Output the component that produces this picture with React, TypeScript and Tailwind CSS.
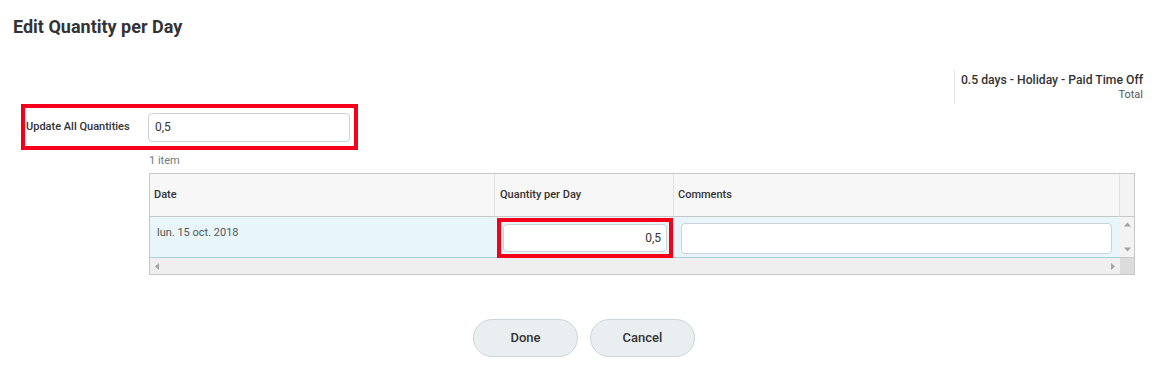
import React from "react";

export default function App() {
  return (
    <div className="w-[1169px] h-[375px] bg-white text-[#333] font-['Roboto',sans-serif] overflow-hidden">
      <div className="pt-[16px] pl-[13px] h-[70px]">
        <h1 className="text-[18px] font-bold leading-[22px] text-[#333]">Edit Quantity per Day</h1>
      </div>
      <div className="flex justify-end pr-[26px] h-[34px]">
        <div className="border-l border-[#e3e3e3] pl-[6px] pt-[2px] flex flex-col items-end">
          <div className="text-[12.2px] font-medium leading-[16px] text-[#333]">0.5 days - Holiday - Paid Time Off</div>
          <div className="text-[11px] leading-[14px] text-[#555]">Total</div>
        </div>
      </div>
      <div className="pl-[21px]">
        <div className="w-[337px] h-[46px] border-[4px] border-[#f4001b] flex items-center">
          <div className="w-[123px] pl-[1px] text-[11px] font-medium text-[#333]">Update All Quantities</div>
          <div className="w-[202px] h-[29px] border border-[#c9d3d8] rounded-[4px] flex items-center px-[6px] text-[12px] text-[#333] bg-white">0,5</div>
        </div>
      </div>
      <div className="pl-[149px] pt-[4px] h-[23px] text-[11px] text-[#6b7b83] leading-[14px]">1 item</div>
      <div className="pl-[149px]">
        <div className="w-[986px] border border-[#c8c8c8] grid grid-cols-[345px_179px_446px_14px]">
          {/* header */}
          <div className="h-[43px] bg-[#f7f7f7] border-b border-[#c8c8c8] border-r border-r-[#e2e2e2] flex items-center pl-[4px] text-[11px] font-medium text-[#333]">Date</div>
          <div className="h-[43px] bg-[#f7f7f7] border-b border-[#c8c8c8] border-r border-r-[#e2e2e2] flex items-center pl-[5px] text-[11px] font-medium text-[#333]">Quantity per Day</div>
          <div className="h-[43px] bg-[#f7f7f7] border-b border-[#c8c8c8] border-r border-r-[#e2e2e2] flex items-center pl-[4px] text-[11px] font-medium text-[#333]">Comments</div>
          <div className="h-[43px] bg-[#f3f3f3] border-b border-[#c8c8c8]"></div>
          {/* data row */}
          <div className="h-[41px] bg-[#e8f6fb] border-b border-[#a9cfdd] pl-[7px] pt-[8px] text-[11px] text-[#555]">lun. 15 oct. 2018</div>
          <div className="h-[41px] bg-[#e8f6fb] border-b border-[#a9cfdd] pl-[2px] pt-[1px]">
            <div className="w-[176px] h-[40px] border-[4px] border-[#f4001b] bg-[#e8f6fb] flex items-center pl-[2px]">
              <div className="w-[164px] h-[28px] border border-[#c9d3d8] rounded-[4px] bg-white flex items-center justify-end pr-[5px] text-[12px] text-[#333]">0,5</div>
            </div>
          </div>
          <div className="h-[41px] bg-[#e8f6fb] border-b border-[#a9cfdd] pl-[7px] pt-[6px]">
            <div className="w-[431px] h-[31px] border border-[#c9d3d8] rounded-[4px] bg-white"></div>
          </div>
          <div className="h-[41px] bg-[#f3f3f3] border-b border-[#c8c8c8] flex flex-col items-center justify-between py-[5px]">
            <svg width="7" height="5" viewBox="0 0 7 5"><path d="M0 4.5 L3.5 0.5 L7 4.5 Z" fill="#a3a3a3" /></svg>
            <svg width="7" height="5" viewBox="0 0 7 5"><path d="M0 0.5 L3.5 4.5 L7 0.5 Z" fill="#a3a3a3" /></svg>
          </div>
          {/* scrollbar row */}
          <div className="col-span-3 h-[16px] bg-[#efefef] flex items-center justify-between px-[5px]">
            <svg width="4" height="7" viewBox="0 0 4 7"><path d="M4 0 L0 3.5 L4 7 Z" fill="#a3a3a3" /></svg>
            <svg width="4" height="7" viewBox="0 0 4 7"><path d="M0 0 L4 3.5 L0 7 Z" fill="#a3a3a3" /></svg>
          </div>
          <div className="h-[16px] bg-[#dcdcdc]"></div>
        </div>
      </div>
      <div className="flex justify-center gap-[12px] pt-[44px] pr-[1px]">
        <button className="w-[105px] h-[38px] rounded-full bg-[#e9eef0] border border-[#ccd6da] text-[13px] font-medium text-[#333]">Done</button>
        <button className="w-[105px] h-[38px] rounded-full bg-[#e9eef0] border border-[#ccd6da] text-[13px] font-medium text-[#333]">Cancel</button>
      </div>
    </div>
  );
}
